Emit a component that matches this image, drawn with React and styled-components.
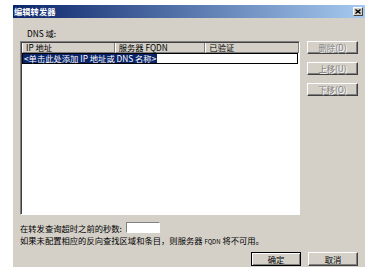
import styled, { createGlobalStyle } from 'styled-components'

const GlobalStyle = createGlobalStyle`
    html, body {
        margin: 0;
        background: #fff;
    }
    body {
        font-family: "Noto Sans CJK SC", "Liberation Sans", sans-serif;
        font-size: 8.3px;
        color: #000;
    }
`

export default function App(){
    const columns = [
        { name: 'IP 地址', width: 93 },
        { name: '服务器 FQDN', width: 91 },
        { name: '已验证', width: 94 }
    ]
    const actions = ['删除(D)', '上移(U)', '下移(O)']

    return(
        <>
        <GlobalStyle/>
        <Window>
            <TitleBar>
                <Title>编辑转发器</Title>
                <CloseButton>
                    <svg width="6" height="5" viewBox="0 0 6 5">
                        <path d="M0.5 0.5 L5.5 4.5 M5.5 0.5 L0.5 4.5" stroke="#000" strokeWidth="1.4"/>
                    </svg>
                </CloseButton>
            </TitleBar>
            <Body>
                <DnsLabel>DNS 域:</DnsLabel>
                <MainRow>
                    <ListView>
                        <Header>
                            {columns.map(col => <HeaderCell key={col.name} $width={col.width}>{col.name}</HeaderCell>)}
                        </Header>
                        <SelectedRow>
                            <Highlight>&lt;单击此处添加 IP 地址或 DNS 名称&gt;</Highlight>
                        </SelectedRow>
                    </ListView>
                    <ButtonColumn>
                        {actions.map(a => <Button key={a} disabled>{a}</Button>)}
                    </ButtonColumn>
                </MainRow>
                <TimeoutRow>
                    <span>在转发查询超时之前的秒数:</span>
                    <TimeoutInput/>
                </TimeoutRow>
                <Note>如果未配置相应的反向查找区域和条目，则服务器 <Small>FQDN</Small> 将不可用。</Note>
                <Footer>
                    <Button $default>确定</Button>
                    <Button>取消</Button>
                </Footer>
            </Body>
        </Window>
        </>
    );
}

const Window = styled.div`
    margin: 5px 0 0 13px;
    width: 352px;
    height: 262px;
    background: #d4d0c8;
    display: flex;
    flex-direction: column;
`
const TitleBar = styled.div`
    height: 13px;
    padding: 0 2px 0 1px;
    display: flex;
    align-items: center;
    justify-content: space-between;
    background: linear-gradient(to right, #0a246a, #a6caf0);
`
const Title = styled.span`
    color: #fff;
    font-weight: 700;
    line-height: 13px;
`
const CloseButton = styled.div`
    width: 10px;
    height: 9px;
    box-sizing: border-box;
    background: #d4d0c8;
    border: 1px solid;
    border-color: #fff #404040 #404040 #fff;
    display: flex;
    align-items: center;
    justify-content: center;
`
const Body = styled.div`
    flex: 1;
    padding: 10px 7px 0 7px;
    display: flex;
    flex-direction: column;
`
const DnsLabel = styled.div`
    margin-left: 7px;
    line-height: 10px;
    margin-bottom: 3px;
`
const MainRow = styled.div`
    display: flex;
    gap: 7px;
`
const ListView = styled.div`
    width: 280px;
    height: 174px;
    box-sizing: border-box;
    background: #fff;
    border: 1px solid;
    border-color: #808080 #fff #fff #808080;
    box-shadow: inset 1px 1px #404040;
    padding: 1px 0 0 1px;
`
const Header = styled.div`
    display: flex;
    height: 10px;
    background: #d4d0c8;
`
const HeaderCell = styled.div`
    width: ${p => p.$width}px;
    box-sizing: border-box;
    padding-left: 3px;
    line-height: 9px;
    border-left: 1px solid #fff;
    border-right: 1px solid #808080;
    border-bottom: 1px solid #808080;
    white-space: nowrap;
`
const SelectedRow = styled.div`
    margin: 0 1px 0 0;
    height: 11px;
    box-sizing: border-box;
    border: 1px solid #000;
    display: flex;
    align-items: center;
`
const Highlight = styled.span`
    background: #0a246a;
    color: #fff;
    line-height: 9px;
    padding: 0 1px;
    white-space: nowrap;
`
const ButtonColumn = styled.div`
    display: flex;
    flex-direction: column;
    gap: 8px;
`
const Button = styled.button`
    width: 51px;
    height: 13px;
    box-sizing: border-box;
    padding: 0;
    font: inherit;
    background: #d4d0c8;
    color: ${p => p.disabled ? '#808080' : '#000'};
    text-shadow: ${p => p.disabled ? '1px 1px #fff' : 'none'};
    border: 1px solid;
    border-color: ${p => p.$default ? '#000' : '#fff #404040 #404040 #fff'};
    box-shadow: ${p => p.$default ? 'inset 1px 1px #fff, inset -1px -1px #808080' : 'inset -1px -1px #808080'};
    line-height: 11px;
`
const TimeoutRow = styled.div`
    margin-top: 7px;
    display: flex;
    align-items: center;
    gap: 4px;
    height: 11px;
`
const TimeoutInput = styled.div`
    width: 34px;
    height: 11px;
    box-sizing: border-box;
    background: #fff;
    border: 1px solid;
    border-color: #808080 #fff #fff #808080;
`
const Note = styled.div`
    margin-top: 2px;
    line-height: 10px;
    white-space: nowrap;
`
const Small = styled.span`
    font-size: 6px;
`
const Footer = styled.div`
    margin-top: 5px;
    display: flex;
    justify-content: flex-end;
    gap: 7px;

    button {
        width: 50px;
        height: 14px;
    }
`
